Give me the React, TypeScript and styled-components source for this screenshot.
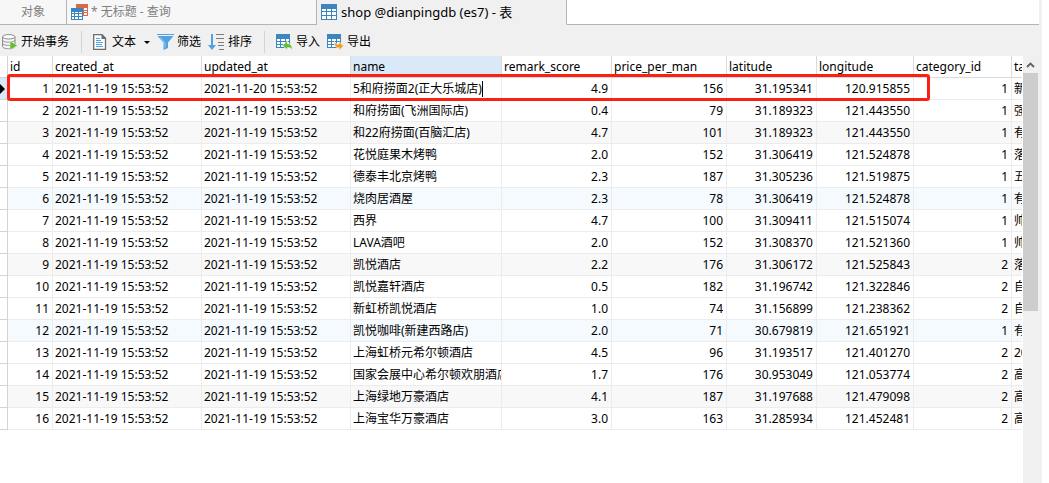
import React from "react";
import styled, { createGlobalStyle, css } from "styled-components";

const GlobalStyle = createGlobalStyle`
  * { box-sizing: border-box; }
  body { margin: 0; background: #fff; }
  body, button, input, table {
    font: 12px/16px "Noto Sans", "Noto Sans CJK SC", sans-serif;
    color: #000;
  }
  button, input { border: 0; padding: 0; margin: 0; background: none; }
`;

const Window = styled.main`
  display: flex;
  flex-direction: column;
  min-height: 100vh;
  margin-right: 7px;
  overflow: hidden;
`;

const TabBar = styled.div`
  display: flex;
  height: 25px;
  padding-right: 3px;
  background: #f0f0f0;
`;

const Tab = styled.button<{ $width: number; $active?: boolean; $center?: boolean }>`
  display: flex;
  align-items: center;
  justify-content: ${(p) => (p.$center ? "center" : "flex-start")};
  gap: 3px;
  width: ${(p) => p.$width}px;
  padding: 0 4px;
  white-space: pre;
  border-right: 1px solid #b4b4b4;
  border-bottom: 1px solid ${(p) => (p.$active ? "#f0f0f0" : "#b4b4b4")};
  background: ${(p) => (p.$active ? "#f0f0f0" : "#f7f7f7")};
  color: ${(p) => (p.$active ? "#000" : "#808080")};
  font-size: ${(p) => (p.$active ? 13 : 12)}px;
`;

const TabFill = styled.div`
  flex: 1;
  border-bottom: 1px solid #b4b4b4;
  background: #fff;
`;

const Toolbar = styled.div`
  display: flex;
  align-items: center;
  height: 31px;
  padding: 3px 2px 0;
  background: #f0f0f0;
`;

const Tool = styled.button`
  display: flex;
  align-items: center;
  gap: 3px;
  margin-right: 7px;
  white-space: nowrap;
`;

const Separator = styled.div`
  width: 1px;
  height: 22px;
  margin: 0 11px 0 5px;
  background: #d4d4d4;
`;

const DropArrow = styled.span`
  margin-left: 5px;
  border: 3px solid transparent;
  border-top-color: #000;
  border-bottom: 0;
`;

const Body = styled.div`
  display: flex;
  flex: 1;
`;

const Grid = styled.div`
  position: relative;
  flex: 1;
  min-width: 0;
  padding-right: 1px;
  overflow: hidden;
`;

const Table = styled.table`
  width: 100%;
  table-layout: fixed;
  border-collapse: separate;
  border-spacing: 0;
`;

const cell = css`
  height: 22px;
  padding: 0 3px 0 2px;
  overflow: hidden;
  white-space: nowrap;
  border-right: 1px solid #ececec;
  border-bottom: 1px solid #ececec;
  &:last-child {
    padding-right: 0;
    border-right: 0;
  }
`;

const HeadCell = styled.th<{ $current?: boolean }>`
  ${cell}
  font-weight: normal;
  text-align: left;
  border-color: #dadada;
  background: ${(p) => (p.$current ? "#d9e9f7" : "#fff")};
`;

const Row = styled.tr<{ $tint: string }>`
  background: ${(p) => p.$tint};
`;

const Cell = styled.td<{ $right?: boolean }>`
  ${cell}
  text-align: ${(p) => (p.$right ? "right" : "left")};
`;

const Gutter = styled.td<{ $selected?: boolean }>`
  ${cell}
  padding: 0;
  border-color: #d4d4d4;
  background: ${(p) => (p.$selected ? "#d9e9f7" : "#fff")};
`;

const RowMarker = styled.span`
  display: block;
  width: 0;
  border: 5px solid transparent;
  border-left-color: #000;
  border-right: 0;
`;

const Editor = styled.div`
  display: flex;
  align-items: center;
`;

const EditInput = styled.input`
  field-sizing: content;
  outline: 0;
`;

const Caret = styled.span`
  width: 1px;
  height: 16px;
  background: #000;
`;

const Highlight = styled.div`
  position: absolute;
  left: 7px;
  top: 18px;
  width: 923px;
  height: 27px;
  border: 3px solid #fb2011;
  border-radius: 3px;
  pointer-events: none;
`;

const ScrollBar = styled.div`
  display: flex;
  flex-direction: column;
  width: 19px;
  padding-right: 4px;
  background: #f0f0f0;
`;

const ScrollButton = styled.button`
  display: flex;
  align-items: center;
  justify-content: center;
  height: 17px;
`;

const Thumb = styled.div`
  height: 238px;
  background: #cdcdcd;
`;

const TableShape = ({ badge }: { badge?: React.ReactNode }) => (
  <svg width="17" height="16" viewBox="0 0 17 16" shapeRendering="crispEdges" aria-hidden>
    <path d={badge ? "M0 0h14v14H0z" : "M0 0h16v16H0z"} fill="#3b86be" />
    {badge ? (
      <path d="M1 5h3v2H1zM5 5h4v2H5zM10 5h3v2h-3zM1 8h3v2H1zM5 8h4v2H5zM10 8h3v2h-3zM1 11h3v2H1zM5 11h4v2H5z" fill="#fff" />
    ) : (
      <path d="M1 5h4v2H1zM6 5h4v2H6zM11 5h4v2h-4zM1 8h4v3H1zM6 8h4v3H6zM11 8h4v3h-4zM1 12h4v3H1zM6 12h4v3H6zM11 12h4v3h-4z" fill="#fff" />
    )}
    {badge}
  </svg>
);

const QueryIcon = () => (
  <svg width="17" height="16" viewBox="0 0 17 16" shapeRendering="crispEdges" aria-hidden>
    <path d="M5 0h12v12H5z" fill="#d9694a" />
    <path d="M6 4h2v2H6zM9 4h3v2H9zM13 4h3v2h-3zM13 7h3v1h-3zM13 9h3v2h-3z" fill="#fff" />
    <path d="M0 4h12v12H0z" fill="#3b86be" />
    <path d="M1 8h2v1H1zM4 8h3v1H4zM8 8h3v1H8zM1 10h2v2H1zM4 10h3v2H4zM8 10h3v2H8zM1 13h2v2H1zM4 13h3v2H4zM8 13h3v2H8z" fill="#fff" />
  </svg>
);

const ImportIcon = () => (
  <TableShape
    badge={
      <g shapeRendering="auto">
        <path d="M6.5 11.5 11.5 7v2.7c3.2 0 5 2 4.700 6.300-1-2-2.400-2.500-4.700-2.500V16z" fill="#5fbf2f" stroke="#f0f0f0" strokeWidth="0.8" />
      </g>
    }
  />
);

const ExportIcon = () => (
  <TableShape
    badge={
      <g shapeRendering="auto">
        <path d="M16.500 12 12 16.500v-2.800C8.800 13.700 7.200 12 7.500 7.500c1 2 2.300 2.700 4.500 2.700V7.800z" fill="#fb980d" stroke="#f0f0f0" strokeWidth="0.8" />
      </g>
    }
  />
);

const TransactionIcon = () => (
  <svg width="16" height="16" viewBox="0 0 16 16" aria-hidden>
    <path d="M.6 3v9.500c0 1.300 2.600 2.200 6 2.200s6.400-1 6.400-2.200V3" fill="#f7f7f7" stroke="#888" />
    <ellipse cx="6.800" cy="2.800" rx="6.200" ry="2.200" fill="#fff" stroke="#888" />
    <path d="M.6 6c0 1.300 2.600 2.200 6 2.200S13 7.300 13 6M.6 9.200c0 1.300 2.600 2.200 6 2.200s6.400-.9 6.400-2.200" fill="none" stroke="#888" />
    <path d="M8 7v9l7.500-4.500z" fill="#5fbf2f" stroke="#f0f0f0" strokeWidth="0.600" />
  </svg>
);

const DocumentIcon = () => (
  <svg width="16" height="16" viewBox="0 0 16 16" aria-hidden>
    <path d="M.7.700h8.300l3.500 3.500v11.100H.7z" fill="#fff" stroke="#6c6c6c" strokeWidth="1.300" />
    <path d="M8.500 0l5 5h-5z" fill="#6c6c6c" />
    <path d="M3 4.500h4M3 6.500h5M3 8.500h7M3 10.500h6M3 12.500h7" stroke="#4fa3e3" />
  </svg>
);

const FilterIcon = () => (
  <svg width="17" height="16" viewBox="0 0 17 16" aria-hidden>
    <path d="M0 0h17v1H0zM.5 2h16L11 8.500V14l-4.500 2V8.500z" fill="#51a2e2" />
    <path d="M3.500 3.500 8 9v4.500" fill="none" stroke="#9ccdf2" />
  </svg>
);

const SortIcon = () => (
  <svg width="17" height="16" viewBox="0 0 17 16" aria-hidden>
    <path d="M3 0h2v11h3l-4 5-4-5h3z" fill="#51a2e2" />
    <path d="M8 .5h8M8 4.500h8M10 8.500h6M10 11.500h6M11 15.500h5" stroke="#7c7c7c" />
  </svg>
);

const columns = [
  { name: "id", width: 45, right: true },
  { name: "created_at", width: 149 },
  { name: "updated_at", width: 149 },
  { name: "name", width: 151 },
  { name: "remark_score", width: 110, right: true },
  { name: "price_per_man", width: 115, right: true },
  { name: "latitude", width: 90, right: true },
  { name: "longitude", width: 97, right: true },
  { name: "category_id", width: 98, right: true },
  { name: "tags", width: 0 },
];

const stamp = "2021-11-19 15:53:52";

const shops = [
  ["5和府捞面2(正大乐城店)", "4.9", "156", "31.195341", "120.915855", "1", "新"],
  ["和府捞面(飞洲国际店)", "0.4", "79", "31.189323", "121.443550", "1", "强"],
  ["和22府捞面(百脑汇店)", "4.7", "101", "31.189323", "121.443550", "1", "有"],
  ["花悦庭果木烤鸭", "2.0", "152", "31.306419", "121.524878", "1", "落"],
  ["德泰丰北京烤鸭", "2.3", "187", "31.305236", "121.519875", "1", "五"],
  ["烧肉居酒屋", "2.3", "78", "31.306419", "121.524878", "1", "有"],
  ["西界", "4.7", "100", "31.309411", "121.515074", "1", "帅"],
  ["LAVA酒吧", "2.0", "152", "31.308370", "121.521360", "1", "帅"],
  ["凯悦酒店", "2.2", "176", "31.306172", "121.525843", "2", "落"],
  ["凯悦嘉轩酒店", "0.5", "182", "31.196742", "121.322846", "2", "自"],
  ["新虹桥凯悦酒店", "1.0", "74", "31.156899", "121.238362", "2", "自"],
  ["凯悦咖啡(新建西路店)", "2.0", "71", "30.679819", "121.651921", "1", "有"],
  ["上海虹桥元希尔顿酒店", "4.5", "96", "31.193517", "121.401270", "2", "20"],
  ["国家会展中心希尔顿欢朋酒店", "1.7", "176", "30.953049", "121.053774", "2", "高"],
  ["上海绿地万豪酒店", "4.1", "187", "31.197688", "121.479098", "2", "高"],
  ["上海宝华万豪酒店", "3.0", "163", "31.285934", "121.452481", "2", "高"],
];

const tint = (n: number) => (n % 6 === 0 ? "#f4fafe" : n % 3 === 0 ? "#f8f8f8" : "#fff");

export default function App() {
  return (
    <>
      <GlobalStyle />
      <Window>
        <TabBar role="tablist">
          <Tab role="tab" $width={67} $center>对象</Tab>
          <Tab role="tab" $width={250}>
            <QueryIcon />
            <span>* 无标题 - 查询</span>
          </Tab>
          <Tab role="tab" aria-selected $width={250} $active>
            <TableShape />
            <span>shop @dianpingdb (es7) - 表</span>
          </Tab>
          <TabFill />
        </TabBar>
        <Toolbar role="toolbar">
          <Tool><TransactionIcon />开始事务</Tool>
          <Separator />
          <Tool><DocumentIcon />文本<DropArrow /></Tool>
          <Tool><FilterIcon />筛选</Tool>
          <Tool><SortIcon />排序</Tool>
          <Separator />
          <Tool><ImportIcon />导入</Tool>
          <Tool><ExportIcon />导出</Tool>
        </Toolbar>
        <Body>
          <Grid>
            <Table>
              <colgroup>
                <col style={{ width: 8 }} />
                {columns.map((c) => (
                  <col key={c.name} style={c.width ? { width: c.width } : undefined} />
                ))}
              </colgroup>
              <thead>
                <tr>
                  <Gutter />
                  {columns.map((c) => (
                    <HeadCell key={c.name} scope="col" $current={c.name === "name"}>
                      {c.name}
                    </HeadCell>
                  ))}
                </tr>
              </thead>
              <tbody>
                {shops.map((shop, i) => {
                  const values = [String(i + 1), stamp, i ? stamp : "2021-11-20 15:53:52", ...shop];
                  return (
                    <Row key={i} $tint={tint(i + 1)}>
                      <Gutter $selected={i === 0}>{i === 0 && <RowMarker />}</Gutter>
                      {values.map((v, j) => (
                        <Cell key={j} $right={columns[j].right}>
                          {i === 0 && j === 3 ? (
                            <Editor>
                              <EditInput aria-label="name" defaultValue={v} />
                              <Caret />
                            </Editor>
                          ) : (
                            v
                          )}
                        </Cell>
                      ))}
                    </Row>
                  );
                })}
              </tbody>
            </Table>
            <Highlight />
          </Grid>
          <ScrollBar>
            <ScrollButton aria-label="Scroll up">
              <svg width="9" height="6" viewBox="0 0 9 6" aria-hidden>
                <path d="M1 5l3.500-3.500L8 5" fill="none" stroke="#606060" strokeWidth="1.800" />
              </svg>
            </ScrollButton>
            <Thumb />
          </ScrollBar>
        </Body>
      </Window>
    </>
  );
}
